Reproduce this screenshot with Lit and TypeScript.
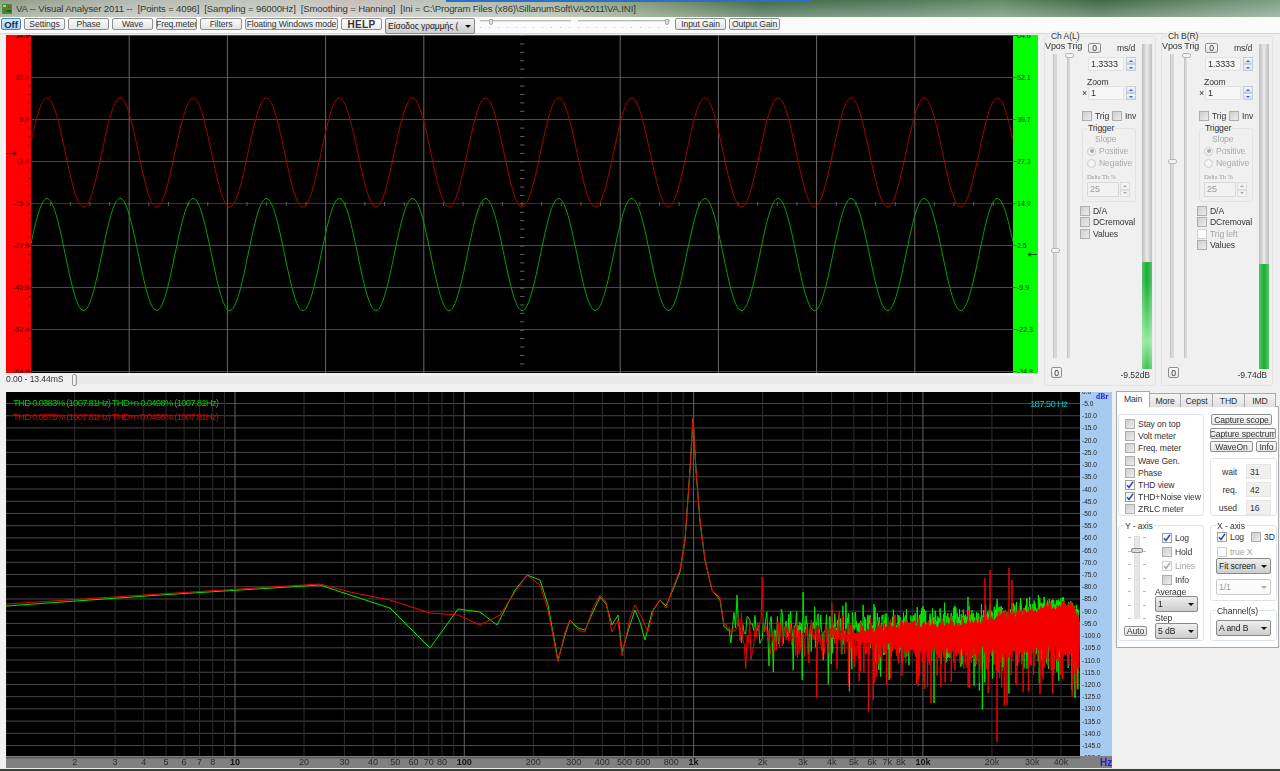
import { LitElement, html, css, svg } from "lit";
import { customElement } from "lit/decorators.js";

const xOf = (f: number) => 235 + 229.3 * (Math.log10(f) - 1);
const yOf = (db: number) => 391.3 + 2.443 * Math.abs(db);

function rng(seed: number) {
  return () => {
    seed |= 0;
    seed = (seed + 0x6d2b79f5) | 0;
    let t = Math.imul(seed ^ (seed >>> 15), 1 | seed);
    t = (t + Math.imul(t ^ (t >>> 7), 61 | t)) ^ t;
    return ((t ^ (t >>> 14)) >>> 0) / 4294967296;
  };
}

function lerp(pts: number[][], x: number) {
  for (let i = 1; i < pts.length; i++) {
    if (x <= pts[i][0]) {
      const [a, b] = pts[i - 1];
      const [c, d] = pts[i];
      return b + ((d - b) * (x - a)) / (c - a);
    }
  }
  return pts[pts.length - 1][1];
}

const BASE = [
  [720, -98], [760, -98.5], [900, -99], [960, -99], [1000, -97.5], [1050, -94.5], [1072, -95], [1079, -100],
];

function noise(seed: number, offset: number, start: number[][], spikes: number[][]) {
  const r = rng(seed);
  const out: number[][] = [...start];
  const bins: number[][] = [];
  for (let k = 58; k < 2048; k++) {
    const x = xOf(k * 23.4375);
    const u = Math.max(r(), 0.0005);
    const rayleigh = Math.sqrt(-Math.log(u));
    const db = lerp(BASE, x) + offset + 20 * Math.log10(rayleigh) * 1.05;
    bins.push([x, yOf(db)]);
  }
  for (const [sx, sy] of spikes) {
    let best = 0;
    for (let i = 0; i < bins.length; i++) {
      if (Math.abs(bins[i][0] - sx) < Math.abs(bins[best][0] - sx)) best = i;
    }
    bins[best][1] = sy;
  }
  out.push(...bins);
  return out.map((p) => `${p[0].toFixed(2)},${p[1].toFixed(1)}`).join(" ");
}

function band() {
  const r = rng(77);
  const top: string[] = [];
  const bot: string[] = [];
  for (let x = 835; x <= 1079; x += 1) {
    const t = Math.min(1, (x - 835) / 70);
    const c = yOf(lerp(BASE, x) - 1.5);
    const hw = (8 + 9 * Math.max(0, (x - 960) / 100)) * t;
    top.push(`${x},${(c - hw - r() * 9 * t).toFixed(1)}`);
    bot.unshift(`${x},${(c + hw + r() * 11 * t).toFixed(1)}`);
  }
  return [...top, ...bot].join(" ");
}

const GREEN_PTS = [
  [6, 606], [160, 595], [320, 585], [350, 595], [390, 608], [430, 648], [458, 609], [480, 612], [497, 625], [515, 590], [527, 575], [540, 580], [548, 605],
  [558, 660], [565, 635], [570, 620], [578, 628], [585, 630], [593, 612], [600, 597], [606, 604], [612, 625], [618, 615], [622, 652], [630, 625], [635, 610], [640, 622], [645, 640], [652, 612], [660, 600], [666, 606],
  [672, 592], [680, 572], [685, 540], [690, 470], [693, 418], [696, 470], [700, 522], [705, 560], [712, 590], [720, 600],
];
const RED_PTS = [
  [6, 604], [160, 594], [320, 584], [350, 592], [390, 600], [430, 613], [458, 615], [480, 625], [500, 615], [515, 592], [527, 575], [540, 585], [548, 610],
  [558, 662], [565, 632], [570, 620], [578, 630], [585, 632], [593, 608], [600, 595], [606, 602], [612, 632], [618, 620], [622, 656], [630, 618], [635, 605], [642, 618], [648, 632], [654, 608], [660, 600], [666, 608],
  [672, 590], [680, 570], [685, 540], [690, 470], [693, 418], [696, 470], [700, 520], [705, 560], [712, 590], [720, 598],
];
const GREEN = noise(11, 3.4, GREEN_PTS, [
  [737, 595], [803, 592], [832, 610], [874, 604], [934, 703], [968, 597], [1044, 597], [1075, 698], [1072, 690], [802, 680], [773, 672],
]);
const RED = noise(29, 0, RED_PTS, [
  [762, 577], [832, 603], [873, 700], [931, 703], [985, 578], [990, 570], [997, 742], [1007, 705], [1009, 568], [1012, 580], [1076, 690],
]);
const BAND = band();

const wave = (mean: number, amp: number) => {
  const p: string[] = [];
  for (let x = 31; x <= 1013; x++) {
    p.push(`${x},${(mean - amp * Math.cos((2 * Math.PI * (x - 47)) / 73.1)).toFixed(2)}`);
  }
  return p.join(" ");
};

const range = (n: number) => Array.from({ length: n }, (_, i) => i);
const LEFT_LABELS = ["34.5", "22.1", "9.7", "-2.7", "-15.1", "-27.5", "-40.0", "-52.4", "-64.8"];
const RIGHT_LABELS = ["64.6", "52.1", "39.7", "27.3", "14.9", "2.5", "-9.9", "-22.3", "-34.8"];
const BTNS: [string, number][] = [
  ["Settings", 41], ["Phase", 41], ["Wave", 41], ["Freq.meter", 41], ["Filters", 42], ["Floating Windows mode", 93],
];

@customElement("app-root")
export class AppRoot extends LitElement {
  static styles = css`
    :host { display: block; width: 1280px; height: 771px; overflow: hidden; background: #f0f0f0; font-family: "Liberation Sans", Arial, sans-serif; font-size: 8.6px; letter-spacing: -0.1px; color: #222; }
    * { box-sizing: border-box; }
    .root { width: 1280px; height: 771px; display: flex; flex-direction: column; filter: blur(0.4px); }
    .title { height: 17px; display: flex; align-items: center; gap: 4px; padding-left: 2px; white-space: pre; font-size: 9.6px; letter-spacing: -0.16px; color: #343a34;
      background:
        linear-gradient(#2d6fc4, #2d6fc4) 446px 0 / 366px 2px no-repeat,
        linear-gradient(180deg, rgba(255,255,255,0), rgba(255,255,255,.3)),
        linear-gradient(90deg, #8e9d86 0, #b4bab0 130px, #c4c8c1 300px, #c9bcbc 345px, #bbc2b7 430px, #a9b5a0 560px, #6f8a68 680px, #41694a 760px, #50795a 900px, #628c68 1000px, #3f6846 1100px, #7fa085 1280px);
    }
    .title svg { width: 10px; height: 10px; flex: none; }
    .toolbar { height: 17px; background: #fbfbfb; border-bottom: 1px solid #d5d5d5; display: flex; align-items: flex-start; padding: 1px 0 0 1px; }
    .btn { display: flex; align-items: center; justify-content: center; height: 12px; border: 1px solid #8f8f8f; border-radius: 2px; background: linear-gradient(180deg, #fafafa, #e4e4e4); color: #333; white-space: nowrap; overflow: hidden; flex: none; }
    .toolbar .btn { margin-right: 3px; }
    .btn.off { width: 20px; background: linear-gradient(180deg, #d5ebfa, #a9d3ef); border-color: #3f86b8; font-weight: bold; color: #12304d; font-size: 9.5px; }
    .btn.help { font-weight: bold; font-size: 10px; letter-spacing: .3px; background: linear-gradient(180deg, #fff, #eee); }
    .combo { display: flex; align-items: center; justify-content: space-between; height: 16px; border: 1px solid #8a8a8a; border-radius: 2px; background: linear-gradient(180deg, #efefef, #cdcdcd); padding: 0 3px 0 2px; color: #222; white-space: nowrap; flex: none; }
    .combo i { flex: none; width: 0; height: 0; margin-left: 2px; border: 3px solid transparent; border-top: 3.5px solid #111; border-bottom: 0; }
    .combo.dis { background: #fbfbfb; border-color: #c8c8c8; color: #9a9a9a; }
    .combo.dis i { border-top-color: #aaa; }
    .hs { width: 91px; height: 14px; margin-right: 7px; position: relative; flex: none; }
    .hs .t { position: absolute; left: 0; right: 0; top: 2px; height: 2px; background: #e4e4e4; border-top: 1px solid #bbb; }
    .hs .k { position: absolute; top: 1px; width: 4px; height: 6px; background: #e0e0e0; border: 1px solid #aaa; border-radius: 0 0 2px 2px; }
    .hs .d { position: absolute; left: 0; right: 0; top: 9px; height: 1px; background: repeating-linear-gradient(90deg, #c4c4c4 0 1px, transparent 1px 8.9px); }

    .upper { height: 356px; display: flex; padding-left: 6px; align-items: flex-start; }
    .scopecol { width: 1034px; flex: none; margin-right: 4px; }
    .scope { display: block; width: 1034px; height: 338px; letter-spacing: 0; }
    .timerow { display: flex; align-items: flex-start; height: 13px; margin-top: 1px; }
    .timerow .lbl { width: 66px; line-height: 10px; color: #333; white-space: nowrap; }
    .timerow .knob { width: 5px; height: 12px; border: 1px solid #999; border-radius: 2px; background: linear-gradient(90deg, #fff, #ddd); flex: none; }
    .timerow .bar { width: 956px; height: 8px; margin-top: 2px; background: #e9e9e9; }

    .chan { width: 112px; height: 350px; margin: 1px 5px 0 0; flex: none; position: relative; border: 1px solid #e3e3e3; border-radius: 3px; display: flex; }
    .legend { position: absolute; top: -6px; left: 5px; padding: 0 1px; line-height: 10px; background: #f0f0f0; white-space: nowrap; color: #333; }
    .leftcol { width: 35px; flex: none; }
    .vt { margin-top: 4px; height: 10px; line-height: 10px; font-size: 9px; white-space: nowrap; color: #333; }
    .tracks { display: flex; margin: 3px 0 0 8px; height: 304px; }
    .vtrack { width: 4px; height: 304px; margin-right: 10px; background: #d8d8d8; border-left: 1px solid #c4c4c4; position: relative; }
    .vtrack b { position: absolute; left: -3px; width: 9px; height: 5px; border: 1px solid #b5b5b5; border-radius: 2px; background: #f4f4f4; }
    .zero { width: 11px; height: 11px; margin: 9px 0 0 6px; }
    .midcol { width: 62px; flex: none; }
    .r { display: flex; align-items: center; }
    .r1 { margin-top: 6px; height: 10px; padding-left: 8px; }
    .r1 .btn { width: 13px; height: 10px; }
    .r1 span { margin-left: 16px; color: #333; }
    .r2 { margin-top: 4px; height: 14px; padding-left: 8px; }
    .edit { width: 36px; height: 14px; background: #f6f6f6; border: 1px solid #e2e2e2; border-radius: 1px; padding-left: 2px; line-height: 12px; font-size: 9px; color: #333; flex: none; }
    .spin { width: 10px; height: 14px; margin-left: 2px; display: flex; flex-direction: column; flex: none; }
    .spin i { flex: 1; background: linear-gradient(180deg, #f6f8fb, #d6dfea); border: 1px solid #c5cdd8; display: flex; align-items: center; justify-content: center; }
    .spin i::after { content: ""; width: 0; height: 0; border: 2px solid transparent; border-bottom: 2.5px solid #3f62c4; border-top: 0; }
    .spin i + i::after { border-bottom: 0; border-top: 2.5px solid #3f62c4; }
    .spin.dis i { background: #f2f2f2; border-color: #ddd; }
    .spin.dis i::after { border-bottom-color: #aaa; }
    .spin.dis i + i::after { border-bottom-color: transparent; border-top-color: #aaa; }
    .zl { margin: 6px 0 0 7px; height: 10px; line-height: 10px; color: #333; }
    .r3 { margin-top: -1px; height: 14px; padding-left: 2px; }
    .r3 em { font-style: normal; width: 6px; font-size: 9px; color: #333; }
    .checks2 { margin-top: 11px; height: 10px; padding-left: 2px; }
    .ck { display: flex; align-items: center; gap: 3px; white-space: nowrap; color: #333; flex: none; }
    .ck i { width: 10px; height: 10px; flex: none; border: 1px solid #aeaeae; background: linear-gradient(135deg, #cfcfcf, #ececec); display: block; }
    .ck svg { display: block; width: 8px; height: 8px; }
    .ck.on i { background: linear-gradient(135deg, #f2f2f2, #fff); border-color: #a0a0a0; }
    .ck.dis { color: #a5a5a5; }
    .ck.dis i { background: #fbfbfb; border-color: #d0d0d0; }
    .trig { margin: 7px 0 0 2px; width: 54px; height: 74px; border: 1px solid #e3e3e3; border-radius: 3px; position: relative; padding: 5px 0 0 4px; color: #aaa; }
    .trig .slope { height: 10px; line-height: 10px; margin-left: 8px; }
    .rad { display: flex; align-items: center; gap: 3px; height: 12px; }
    .rad i { width: 9px; height: 9px; border-radius: 50%; border: 1px solid #ccc; background: #f4f4f4; display: flex; align-items: center; justify-content: center; }
    .rad i.s::after { content: ""; width: 4px; height: 4px; border-radius: 50%; background: #aaa; }
    .delta { margin-top: 3px; height: 10px; line-height: 10px; font-family: "Liberation Serif", serif; font-size: 6.5px; white-space: nowrap; color: #999; }
    .trig .ed { display: flex; align-items: center; height: 15px; }
    .trig .edit { width: 32px; height: 15px; color: #999; line-height: 13px; background: #f2f2f2; border-color: #d8d8d8; }
    .trig .spin { height: 15px; margin-left: 1px; }
    .lst { margin: 3px 0 0 0; }
    .lst .ck { height: 11.5px; }
    .metercol { width: 10px; flex: none; display: flex; flex-direction: column; align-items: flex-end; }
    .meter { width: 10px; height: 325px; margin-top: 7px; display: flex; flex-direction: column; justify-content: flex-end; background: linear-gradient(90deg, #bdbdbd, #eaeaea 50%, #bdbdbd); flex: none; }
    .fill { width: 100%; background: linear-gradient(90deg, #58c468, #16ae34 50%, #58c468); }
    .fill.a { background: linear-gradient(180deg, rgba(170,245,175,0) 18%, rgba(190,250,195,.75) 75%, rgba(190,250,195,.25) 98%), linear-gradient(90deg, #58c468, #16ae34 50%, #58c468); }
    .db { margin: 1px 2px 0 0; height: 10px; line-height: 10px; white-space: nowrap; color: #333; }

    .lower { height: 378px; display: flex; padding-left: 6px; align-items: flex-start; }
    .spec { display: block; width: 1106px; height: 376px; margin: 1px 4px 0 0; flex: none; letter-spacing: 0; }
    .tabs { width: 163px; flex: none; }
    .tabrow { display: flex; height: 16px; position: relative; z-index: 1; }
    .tab { height: 14px; margin-top: 2px; border: 1px solid #a8a8a8; border-left: 0; border-bottom: 0; background: linear-gradient(180deg, #f4f4f4, #e0e0e0); display: flex; align-items: center; justify-content: center; color: #333; }
    .tab.act { height: 16px; margin-top: 0; background: #fff; border-left: 1px solid #a8a8a8; padding-bottom: 2px; }
    .body { height: 242px; margin-top: -1px; background: #fff; border: 1px solid #a8a8a8; padding: 7px 0 0 1px; display: flex; gap: 6px; }
    .colA { width: 86px; flex: none; }
    .colB { width: 67px; flex: none; }
    .grp { position: relative; border: 1px solid #dde3ea; border-radius: 3px; background: #fff; }
    .grp .legend { background: #fff; top: -5px; }
    .g1 { height: 102px; padding: 3px 0 0 6px; }
    .g1 .ck { height: 12.2px; }
    .g2 { height: 116px; margin-top: 9px; display: flex; }
    .sliderc { width: 36px; flex: none; }
    .yslider { position: relative; margin-top: 10px; height: 83px; }
    .yslider .y { position: absolute; left: 15px; top: 0; bottom: 0; width: 6px; background: #e6e6e6; border: 1px solid #e0e0e0; }
    .yslider .m { position: absolute; left: 9px; width: 18px; top: 1px; bottom: 0; background:
        repeating-linear-gradient(180deg, #bbb 0 1px, transparent 1px 13.5px) left / 3px 100% no-repeat,
        repeating-linear-gradient(180deg, #bbb 0 1px, transparent 1px 13.5px) right / 3px 100% no-repeat; }
    .yslider b { position: absolute; left: 12px; top: 12px; width: 12px; height: 5px; background: #d8d8d8; border: 1px solid #8c8c8c; border-radius: 2px; }
    .auto { width: 23px; height: 10px; margin: 7px 0 0 5px; }
    .ctrlc { flex: 1; padding-top: 5px; }
    .ctrlc .ck { height: 14px; margin-left: 7px; }
    .capt { height: 10px; line-height: 10px; color: #333; }
    .ctrlc .combo { width: 43px; }
    .cap1 { width: 61px; height: 11px; margin-left: 1px; }
    .cap2 { width: 66px; height: 11px; margin-top: 3px; }
    .row3 { display: flex; gap: 3px; margin-top: 2px; }
    .stats { height: 58px; margin-top: 6px; padding: 5px 0 0 0; display: grid; grid-template-columns: 26px 25px; column-gap: 9px; row-gap: 3px; grid-auto-rows: 15px; align-items: center; }
    .stats span { text-align: right; color: #333; }
    .stats em { font-style: normal; height: 15px; line-height: 14px; padding-left: 3px; background: #f0f0f0; border: 1px solid #e6e6e6; color: #333; }
    .g3 { height: 76px; margin-top: 9px; padding-top: 6px; }
    .g3 .ck { height: 10px; }
    .g3 .lr { display: flex; padding-left: 6px; }
    .g3 .lr .ck:first-child { width: 34px; }
    .g3 .tx { margin: 5px 0 0 6px; }
    .g3 .combo, .g4 .combo { width: 55px; margin-left: 5px; }
    .g3 .c1 { margin-top: 1px; }
    .g3 .c2 { margin-top: 5px; }
    .g4 { height: 31px; margin-top: 9px; padding-top: 9px; }
    .foot { height: 2px; background: #3b3f3b; }

    .gh { stroke: #4a4a4a; stroke-width: 1; }
    .gv { stroke: #666; stroke-width: 1; }
    .tk { stroke: #5c5c5c; stroke-width: 1; }
    .sl { font: 7px "Liberation Sans", sans-serif; fill: #3a0000; }
    .sr { font: 7px "Liberation Sans", sans-serif; fill: #003a00; }
    .wv { fill: none; stroke-width: 1; }
    .db2 { font: 6.6px "Liberation Sans", sans-serif; fill: #222; }
    .dbr { font: bold 7.5px "Liberation Serif", serif; fill: #1a1aee; }
    .xl { font: 9px "Liberation Sans", sans-serif; fill: #2a2a2a; text-anchor: middle; }
    .xl.bd { font-weight: bold; fill: #111; }
    .hz { font: bold 10px "Liberation Sans", sans-serif; fill: #1a1aee; }
    .th { font: 9.6px "Liberation Sans", sans-serif; }
  `;

  private ck(label: string, on = false, dis = false) {
    return html`<div class="ck ${on ? "on" : ""} ${dis ? "dis" : ""}"><i>${on
      ? html`<svg viewBox="0 0 8 8"><path d="M1 4.2 L3 6.5 L7 .8" fill="none" stroke="${dis ? "#aaa" : "#2a4ea8"}" stroke-width="1.5"/></svg>`
      : ""}</i>${label}</div>`;
  }
  private combo(label: string, cls = "", style = "") {
    return html`<div class="combo ${cls}" style=${style}><span>${label}</span><i></i></div>`;
  }
  private spin(dis = false) {
    return html`<div class="spin ${dis ? "dis" : ""}"><i></i><i></i></div>`;
  }

  private channel(name: string, vpos: number, level: number, db: string, extra: boolean, cls: string) {
    return html`<div class="chan">
      <div class="legend">${name}</div>
      <div class="leftcol">
        <div class="vt">Vpos Trig</div>
        <div class="tracks">
          <div class="vtrack"><b style="top:${vpos}px"></b></div>
          <div class="vtrack"><b style="top:-1px"></b></div>
        </div>
        <div class="btn zero">0</div>
      </div>
      <div class="midcol">
        <div class="r r1"><div class="btn">0</div><span>ms/d</span></div>
        <div class="r r2"><div class="edit">1.3333</div>${this.spin()}</div>
        <div class="zl">Zoom</div>
        <div class="r r3"><em>×</em><div class="edit">1</div>${this.spin()}</div>
        <div class="r checks2"><div style="width:30px">${this.ck("Trig")}</div>${this.ck("Inv")}</div>
        <div class="trig">
          <div class="legend" style="color:#333;left:4px">Trigger</div>
          <div class="slope">Slope</div>
          <div class="rad" style="margin-top:1px"><i class="s"></i>Positive</div>
          <div class="rad"><i></i>Negative</div>
          <div class="delta">Delta Th %</div>
          <div class="ed"><div class="edit">25</div>${this.spin(true)}</div>
        </div>
        <div class="lst">
          ${this.ck("D/A")}${this.ck("DCremoval")}${extra ? this.ck("Trig left", false, true) : ""}${this.ck("Values")}
        </div>
      </div>
      <div class="metercol">
        <div class="meter"><div class="fill ${cls}" style="height:${level}px"></div></div>
        <div class="db">${db}</div>
      </div>
    </div>`;
  }

  private scope() {
    const hs = range(9).map((i) => 35.5 + i * 42);
    const vs = range(11).map((i) => 31 + i * 98.2);
    return html`<svg class="scope" viewBox="6 35 1034 338" preserveAspectRatio="none">
      <rect x="6" y="35" width="25" height="338" fill="#ff0000"/>
      <rect x="31" y="35" width="982" height="338" fill="#000"/>
      <rect x="1013" y="35" width="25" height="338" fill="#00ff00"/>
      <rect x="1038" y="35" width="2" height="338" fill="#f0f0f0"/>
      ${hs.map((y, i) => svg`<line class="gh" x1="31" x2="1013" y1=${y} y2=${y} style=${i === 4 ? "stroke:#333" : ""}/>`)}
      ${hs.map((y) => svg`<line class="gh" x1="25" x2="31" y1=${y} y2=${y} style="stroke:#900"/><line class="gh" x1="1013" x2="1017" y1=${y} y2=${y} style="stroke:#090"/>`)}
      ${vs.filter((_, i) => i !== 5 && i > 0 && i < 10).map((x) => svg`<line class="gv" x1=${x} x2=${x} y1="35" y2="373"/>`)}
      ${range(50).map((i) => svg`<line class="tk" x1=${31 + i * 19.64} x2=${31 + i * 19.64} y1="202" y2="206"/>`)}
      ${range(40).map((i) => svg`<line class="tk" x1="520" x2="524.5" y1=${35.5 + i * 8.42} y2=${35.5 + i * 8.42}/>`)}
      ${range(40).map((i) => svg`<line x1="28" x2="31" y1=${35.5 + i * 8.42} y2=${35.5 + i * 8.42} stroke="#a00" stroke-width="1"/>`)}
      <polyline class="wv" points=${wave(152.5, 54.5)} stroke="#a50000"/>
      <polyline class="wv" points=${wave(254.5, 56)} stroke="#00a000"/>
      ${LEFT_LABELS.map((t, i) => svg`<text class="sl" x="29" y=${hs[i] + 2.5} text-anchor="end">${t}</text>`)}
      ${RIGHT_LABELS.map((t, i) => svg`<text class="sr" x="1017" y=${hs[i] + 2.5}>${t}</text>`)}
      <path d="M7 153.5 H16 M13.5 151.8 L16.5 153.5 L13.5 155.2" fill="none" stroke="#300" stroke-width=".9"/>
      <path d="M1037 254.5 H1028.5 M1031 252.8 L1028 254.5 L1031 256.2" fill="none" stroke="#030" stroke-width=".9"/>
    </svg>`;
  }

  private spectrum() {
    const lines: { x: number; maj: boolean; lab: string; bold: boolean }[] = [];
    for (const d of [1, 10, 100, 1000, 10000]) {
      for (let m = 1; m <= 9; m++) {
        const f = m * d;
        const x = xOf(f);
        if (x > 1079) continue;
        let lab = "";
        if (m !== 9 && f >= 2 && f !== 700) lab = f >= 1000 ? `${f / 1000}k` : `${f}`;
        lines.push({ x, maj: m === 1, lab, bold: m === 1 });
      }
    }
    return html`<svg class="spec" viewBox="6 392 1106 376" preserveAspectRatio="none">
      <rect x="6" y="392" width="1074" height="364" fill="#000"/>
      <rect x="1080" y="392" width="32" height="364" fill="#a6caf0"/>
      <rect x="6" y="756" width="1106" height="12" fill="#808080"/>
      ${range(31).map((i) => {
        const y = yOf(i * 5);
        return svg`<line class="gh" x1="6" x2="1080" y1=${y} y2=${y} style="stroke:#484848"/>`;
      })}
      ${lines.map((l) => svg`<line x1=${l.x} x2=${l.x} y1="392" y2="756" stroke=${l.maj ? "#626262" : "#2e2e2e"} stroke-width="1"/>`)}
      <polyline class="wv" points=${GREEN} stroke="#00e800" stroke-width=".9"/>
      <polygon points=${BAND} fill="#f40000"/>
      <polyline class="wv" points=${RED} stroke="#f40000" stroke-width="1"/>
      <rect x="1080" y="392" width="32" height="364" fill="#a6caf0"/>
      <text class="th" x="13" y="406" fill="#00c400" textLength="206">THD 0.0383% (1007.81Hz) THD+n 0.0498% (1007.81Hz)</text>
      <text class="th" x="13" y="420" fill="#d80000" textLength="206">THD 0.0575% (1007.81Hz) THD+n 0.0496% (1007.81Hz)</text>
      <text class="th" x="1030" y="407" fill="#00c4c4" textLength="38">187.50 Hz</text>
      ${range(31).map((i) => {
        const y = yOf(i * 5) + 2.5;
        return svg`<text class="db2" x="1082" y=${y}>${i === 0 ? "0.0" : `-${i * 5}.0`}</text>`;
      })}
      <rect x="1080" y="756" width="32" height="12" fill="#808080"/>
      <text class="dbr" x="1096" y="399">dBr</text>
      ${lines.filter((l) => l.lab).map((l) => svg`<text class="xl ${l.bold ? "bd" : ""}" x=${l.x} y="765">${l.lab}</text>`)}
      <text class="hz" x="1100" y="766">Hz</text>
    </svg>`;
  }

  render() {
    return html`<div class="root">
      <div class="title">
        <svg viewBox="0 0 10 10"><rect width="10" height="10" fill="#3f8f3a"/><rect x="1" y="1" width="3" height="2" fill="#c8d23c"/><rect x="6" y="2" width="3" height="2" fill="#c23a2a"/><rect x="2" y="5" width="2" height="3" fill="#c23a2a"/><rect x="5" y="6" width="4" height="2" fill="#1f5c22"/></svg>
        <span>VA -- Visual Analyser 2011 --  [Points = 4096]  [Sampling = 96000Hz]  [Smoothing = Hanning]  [Ini = C:\\Program Files (x86)\\SillanumSoft\\VA2011\\VA.INI]</span>
      </div>
      <div class="toolbar">
        <div class="btn off">Off</div>
        ${BTNS.map(([t, w]) => html`<div class="btn" style="width:${w}px">${t}</div>`)}
        <div class="btn help" style="width:41px">HELP</div>
        ${this.combo("Είσοδος γραμμής (", "", "width:90px;margin-right:5px")}
        <div class="hs"><div class="t"></div><div class="k" style="left:9px"></div><div class="d"></div></div>
        <div class="hs" style="width:92px;margin-right:5px"><div class="t"></div><div class="k" style="right:1px"></div><div class="d"></div></div>
        <div class="btn" style="width:51px">Input Gain</div>
        <div class="btn" style="width:51px">Output Gain</div>
      </div>
      <div style="height:1px"></div>
      <div class="upper">
        <div class="scopecol">
          ${this.scope()}
          <div class="timerow">
            <div class="lbl">0.00 - 13.44mS</div>
            <div class="knob"></div>
            <div class="bar"></div>
          </div>
        </div>
        ${this.channel("Ch A(L)", 194, 107, "-9.52dB", false, "a")}
        ${this.channel("Ch B(R)", 105, 105, "-9.74dB", true, "b")}
      </div>
      <div class="lower">
        ${this.spectrum()}
        <div class="tabs">
          <div class="tabrow">
            <div class="tab act" style="width:34px">Main</div>
            <div class="tab" style="width:31px">More</div>
            <div class="tab" style="width:32px">Cepst</div>
            <div class="tab" style="width:32px">THD</div>
            <div class="tab" style="width:31px">IMD</div>
          </div>
          <div class="body">
            <div class="colA">
              <div class="grp g1">
                ${this.ck("Stay on top")}${this.ck("Volt meter")}${this.ck("Freq. meter")}${this.ck("Wave Gen.")}
                ${this.ck("Phase")}${this.ck("THD view", true)}${this.ck("THD+Noise view", true)}${this.ck("ZRLC meter")}
              </div>
              <div class="grp g2">
                <div class="legend">Y - axis</div>
                <div class="sliderc">
                  <div class="yslider"><div class="m"></div><div class="y"></div><b></b></div>
                  <div class="btn auto">Auto</div>
                </div>
                <div class="ctrlc">
                  ${this.ck("Log", true)}${this.ck("Hold")}${this.ck("Lines", true, true)}${this.ck("Info")}
                  <div class="capt">Average</div>
                  ${this.combo("1", "", "margin-top:-1px")}
                  <div class="capt" style="margin-top:1px">Step</div>
                  ${this.combo("5 dB")}
                </div>
              </div>
            </div>
            <div class="colB">
              <div class="btn cap1">Capture scope</div>
              <div class="btn cap2">Capture spectrum</div>
              <div class="row3">
                <div class="btn" style="width:43px;height:11px">WaveOn</div>
                <div class="btn" style="width:21px;height:11px">Info</div>
              </div>
              <div class="grp stats">
                <span>wait</span><em>31</em>
                <span>req.</span><em>42</em>
                <span>used</span><em>16</em>
              </div>
              <div class="grp g3">
                <div class="legend">X - axis</div>
                <div class="lr">${this.ck("Log", true)}${this.ck("3D")}</div>
                <div class="tx">${this.ck("true X", false, true)}</div>
                ${this.combo("Fit screen", "c1")}
                ${this.combo("1/1", "c2 dis")}
              </div>
              <div class="grp g4">
                <div class="legend">Channel(s)</div>
                ${this.combo("A and B")}
              </div>
            </div>
          </div>
        </div>
      </div>
      <div class="foot"></div>
    </div>`;
  }
}
